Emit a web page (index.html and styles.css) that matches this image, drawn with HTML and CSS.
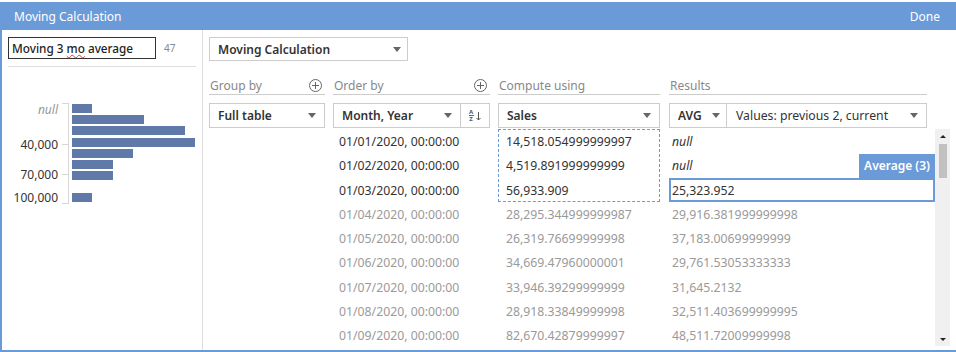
FILE: index.html
```html
<!DOCTYPE html>
<html lang="en">
<head>
	<meta charset="UTF-8">
	<title>Moving Calculation</title>
	<link rel="stylesheet" href="styles.css">
</head>
<body>
	<div class="dialog">
		<div class="titlebar">
			<span>Moving Calculation</span>
			<span class="done">Done</span>
		</div>
		<div class="main">
			<!-- left: field name and value histogram -->
			<div class="side">
				<div class="name-row">
					<div class="name-box">Moving 3 <span class="typo">mo</span> average</div>
					<span class="count">47</span>
				</div>
				<div class="side-rule"></div>
				<svg class="hist" width="200" height="110" viewBox="2 98 200 110">
					<line x1="68.5" y1="103" x2="68.5" y2="204" stroke="#d6d6d6" />
					<line x1="62" y1="103.5" x2="68" y2="103.5" stroke="#d6d6d6" />
					<line x1="62" y1="144.5" x2="68" y2="144.5" stroke="#d6d6d6" />
					<line x1="62" y1="174.5" x2="68" y2="174.5" stroke="#d6d6d6" />
					<line x1="62" y1="203.5" x2="68" y2="203.5" stroke="#d6d6d6" />
					<text class="h-null" x="58" y="114" text-anchor="end">null</text>
					<text class="h-label" x="58" y="149" text-anchor="end">40,000</text>
					<text class="h-label" x="58" y="179" text-anchor="end">70,000</text>
					<text class="h-label" x="58" y="202" text-anchor="end">100,000</text>
					<rect x="72" y="104" width="20" height="9" fill="#5f79a8" />
					<rect x="72" y="115" width="72" height="9" fill="#5f79a8" />
					<rect x="72" y="126" width="113" height="9" fill="#5f79a8" />
					<rect x="72" y="138" width="123" height="9" fill="#5f79a8" />
					<rect x="72" y="149" width="61" height="9" fill="#5f79a8" />
					<rect x="72" y="160" width="41" height="9" fill="#5f79a8" />
					<rect x="72" y="171" width="41" height="9" fill="#5f79a8" />
					<rect x="72" y="193" width="20" height="9" fill="#5f79a8" />
				</svg>
			</div>

			<!-- right: calculation editor -->
			<div class="editor">
				<div class="select calc-type">Moving Calculation<i class="caret"></i></div>

				<div class="row heads">
					<div class="c-group head">Group by
						<svg class="plus" width="13" height="13" viewBox="0 0 13 13"><circle cx="6.5" cy="6.5" r="6" fill="none" stroke="#666" /><path d="M6.5 3v7M3 6.5h7" stroke="#666" /></svg>
					</div>
					<div class="c-order head">Order by
						<svg class="plus" width="13" height="13" viewBox="0 0 13 13"><circle cx="6.5" cy="6.5" r="6" fill="none" stroke="#666" /><path d="M6.5 3v7M3 6.5h7" stroke="#666" /></svg>
					</div>
					<div class="c-compute head">Compute using</div>
					<div class="c-results head">Results</div>
				</div>

				<div class="row selects">
					<div class="c-group select">Full table<i class="caret"></i></div>
					<div class="c-order order-pick">
						<div class="select grow">Month, Year<i class="caret"></i></div>
						<div class="sort-btn">
							<svg width="14" height="13" viewBox="0 0 14 13">
								<text x="3" y="5" class="az">A</text>
								<line x1="1" y1="6.5" x2="6" y2="6.5" stroke="#666" />
								<text x="3" y="12" class="az">Z</text>
								<path d="M10.5 3v8M8.5 9l2 2 2-2" fill="none" stroke="#555" />
							</svg>
						</div>
					</div>
					<div class="c-compute select">Sales<i class="caret"></i></div>
					<div class="c-results split">
						<div class="select agg">AVG<i class="caret"></i></div>
						<div class="select grow plain">Values: previous 2, current<i class="caret"></i></div>
					</div>
				</div>

				<div class="row data">
					<div class="c-group"></div>
					<div class="c-order dates">
						<div class="cell">01/01/2020, 00:00:00</div>
						<div class="cell">01/02/2020, 00:00:00</div>
						<div class="cell">01/03/2020, 00:00:00</div>
						<div class="cell dim">01/04/2020, 00:00:00</div>
						<div class="cell dim">01/05/2020, 00:00:00</div>
						<div class="cell dim">01/06/2020, 00:00:00</div>
						<div class="cell dim">01/07/2020, 00:00:00</div>
						<div class="cell dim">01/08/2020, 00:00:00</div>
						<div class="cell dim">01/09/2020, 00:00:00</div>
					</div>
					<div class="c-compute values">
						<div class="window">
							<div class="cell">14,518.054999999997</div>
							<div class="cell">4,519.891999999999</div>
							<div class="cell">56,933.909</div>
						</div>
						<div class="cell dim">28,295.344999999987</div>
						<div class="cell dim">26,319.76699999998</div>
						<div class="cell dim">34,669.47960000001</div>
						<div class="cell dim">33,946.39299999999</div>
						<div class="cell dim">28,918.33849999998</div>
						<div class="cell dim">82,670.42879999997</div>
					</div>
					<div class="c-results results">
						<div class="cell null">null</div>
						<div class="cell null">null</div>
						<div class="cell current">25,323.952<span class="badge">Average (3)</span></div>
						<div class="cell dim">29,916.381999999998</div>
						<div class="cell dim">37,183.00699999999</div>
						<div class="cell dim">29,761.53053333333</div>
						<div class="cell dim">31,645.2132</div>
						<div class="cell dim">32,511.403699999995</div>
						<div class="cell dim">48,511.72009999998</div>
					</div>
					<div class="scrollbar">
						<div class="sb-btn"><i class="sb-up"></i></div>
						<div class="sb-thumb"></div>
						<div class="sb-space"></div>
						<div class="sb-btn"><i class="sb-down"></i></div>
					</div>
				</div>
			</div>
		</div>
	</div>
</body>
</html>
```

FILE: styles.css
```css
body {
	margin: 0;
	background-color: #fff;
	font-family: "Noto Sans", "Open Sans", sans-serif;
	color: #333;
}
.dialog {
	margin-top: 2px;
	width: 956px;
	height: 350px;
	display: flex;
	flex-direction: column;
}
.titlebar {
	height: 28px;
	flex: none;
	background-color: #6a9bd8;
	color: #fff;
	font-size: 12px;
	display: flex;
	align-items: center;
	justify-content: space-between;
	padding: 0 16px 0 14px;
}
.main {
	flex: 1;
	min-height: 0;
	display: flex;
	border-left: 2px solid #6a9bd8;
	border-bottom: 2px solid #6a9bd8;
}

/* left side */
.side {
	width: 200px;
	flex: none;
	border-right: 1px solid #ddd;
}
.name-row {
	display: flex;
	align-items: center;
	padding: 7px 0 0 6px;
}
.name-box {
	box-sizing: border-box;
	width: 148px;
	height: 22px;
	border: 1px solid #333;
	padding-left: 3px;
	font-size: 11.75px;
	line-height: 20px;
	color: #222;
	font-weight: 500;
}
.typo {
	text-decoration-line: underline;
	text-decoration-style: wavy;
	text-decoration-color: #e33;
	text-decoration-thickness: 1px;
	text-underline-offset: 1px;
}
.count {
	margin-left: 8px;
	font-size: 10px;
	color: #888;
}
.side-rule {
	height: 1px;
	margin: 7px 6px 0 6px;
	background-color: #ddd;
}
.hist {
	display: block;
	margin-top: 31px;
}
.h-label {
	font-size: 12px;
	fill: #333;
}
.h-null {
	font-size: 12px;
	font-style: italic;
	fill: #999;
}

/* editor */
.editor {
	flex: 1;
	min-width: 0;
	display: flex;
	flex-direction: column;
	padding-left: 6px;
}
.select {
	box-sizing: border-box;
	height: 25px;
	border: 1px solid #ccc;
	padding: 0 8px;
	display: flex;
	align-items: center;
	justify-content: space-between;
	font-size: 12px;
	font-weight: 600;
	color: #333;
}
.select.plain {
	font-weight: 400;
	font-size: 12.25px;
}
.caret {
	width: 0;
	height: 0;
	border-left: 4px solid transparent;
	border-right: 4px solid transparent;
	border-top: 5px solid #666;
}
.calc-type {
	margin-top: 7px;
	width: 199px;
	height: 24px;
	padding-right: 6px;
}
.row {
	display: flex;
}
.c-group {
	width: 116px;
	flex: none;
}
.c-order {
	width: 157px;
	flex: none;
	margin-left: 8px;
}
.c-compute {
	width: 162px;
	flex: none;
	margin-left: 8px;
}
.c-results {
	width: 258px;
	flex: none;
	margin-left: 9px;
}
.heads {
	margin-top: 15px;
}
.head {
	box-sizing: border-box;
	height: 19px;
	border-bottom: 1px solid #ccc;
	padding: 0 3px 0 1px;
	font-size: 12px;
	color: #888;
	display: flex;
	align-items: center;
	justify-content: space-between;
}
.plus {
	display: block;
}
.selects {
	margin-top: 8px;
}
.order-pick,
.split {
	display: flex;
}
.grow {
	flex: 1;
}
.sort-btn {
	box-sizing: border-box;
	width: 29px;
	height: 25px;
	border: 1px solid #ccc;
	border-left: none;
	display: flex;
	align-items: center;
	justify-content: center;
}
.az {
	font-size: 6px;
	font-weight: 700;
	fill: #555;
	text-anchor: middle;
}
.agg {
	width: 58px;
	flex: none;
	padding-right: 6px;
}
.split .grow {
	border-left: none;
	padding-left: 9px;
}

/* data rows */
.data {
	flex: 1;
	min-height: 0;
	overflow: hidden;
	font-size: 12.25px;
	padding-top: 1px;
}
.cell {
	height: 24.25px;
	line-height: 25px;
	white-space: nowrap;
	color: #333;
}
.cell.dim {
	color: #9a9a9a;
}
.dates .cell {
	padding-left: 6px;
}
.values .cell {
	padding-left: 8px;
}
.window {
	outline: 1px dashed #6a9bd8;
	outline-offset: -1px;
}
.results {
	width: 266px;
}
.results .cell {
	padding-left: 3px;
}
.cell.null {
	font-style: italic;
}
.cell.current {
	position: relative;
	box-shadow: inset 0 0 0 2px #6a9bd8;
}
.badge {
	position: absolute;
	right: 0;
	bottom: 100%;
	height: 24px;
	line-height: 24px;
	padding: 0 5px;
	background-color: #6a9bd8;
	color: #fff;
	font-size: 12px;
	font-weight: 600;
	font-style: normal;
}

/* scrollbar */
.scrollbar {
	width: 15px;
	flex: none;
	margin: 0 0 4px 0;
	background-color: #f0f0f0;
	display: flex;
	flex-direction: column;
	align-items: center;
}
.sb-btn {
	height: 14px;
	display: flex;
	align-items: center;
	justify-content: center;
}
.sb-up {
	border-left: 3px solid transparent;
	border-right: 3px solid transparent;
	border-bottom: 3px solid #222;
}
.sb-down {
	border-left: 3px solid transparent;
	border-right: 3px solid transparent;
	border-top: 3px solid #222;
}
.sb-thumb {
	width: 8px;
	height: 34px;
	margin-top: 1px;
	background-color: #c1c1c1;
}
.sb-space {
	flex: 1;
}
```
